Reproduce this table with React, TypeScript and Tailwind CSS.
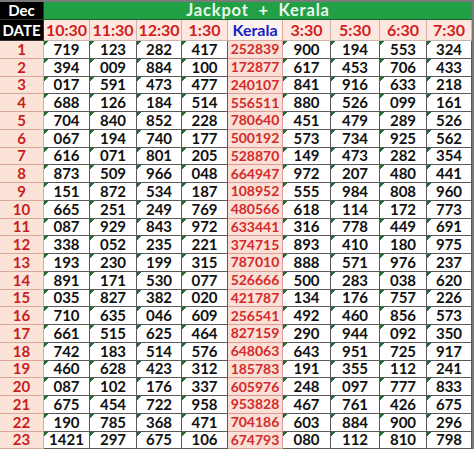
import React from 'react';

const times = ['10:30', '11:30', '12:30', '1:30', 'Kerala', '3:30', '5:30', '6:30', '7:30'];

// 10:30, 11:30, 12:30, 1:30, kerala, 3:30, 5:30, 6:30, 7:30
const rows: string[][] = [
  ['719', '123', '282', '417', '252839', '900', '194', '553', '324'],
  ['394', '009', '884', '100', '172877', '617', '453', '706', '433'],
  ['017', '591', '473', '477', '240107', '841', '916', '633', '218'],
  ['688', '126', '184', '514', '556511', '880', '526', '099', '161'],
  ['704', '840', '852', '228', '780640', '451', '479', '289', '526'],
  ['067', '194', '740', '177', '500192', '573', '734', '925', '562'],
  ['616', '071', '801', '205', '528870', '149', '473', '282', '354'],
  ['873', '509', '966', '048', '664947', '972', '207', '480', '441'],
  ['151', '872', '534', '187', '108952', '555', '984', '808', '960'],
  ['665', '251', '249', '769', '480566', '618', '114', '172', '773'],
  ['087', '929', '843', '972', '633441', '316', '778', '449', '691'],
  ['338', '052', '235', '221', '374715', '893', '410', '180', '975'],
  ['193', '230', '199', '315', '787010', '888', '571', '976', '237'],
  ['891', '171', '530', '077', '526666', '500', '283', '038', '620'],
  ['035', '827', '382', '020', '421787', '134', '176', '757', '226'],
  ['710', '635', '046', '609', '256541', '492', '460', '856', '573'],
  ['661', '515', '625', '464', '827159', '290', '944', '092', '350'],
  ['742', '183', '514', '576', '648063', '643', '951', '725', '917'],
  ['460', '628', '423', '312', '185783', '191', '355', '112', '241'],
  ['087', '102', '176', '337', '605976', '248', '097', '777', '833'],
  ['675', '454', '722', '958', '953828', '467', '761', '426', '675'],
  ['190', '785', '368', '471', '704186', '603', '884', '900', '296'],
  ['1421', '297', '675', '106', '674793', '080', '112', '810', '798'],
];

const cell = 'flex items-center justify-center border-r border-b border-[#5a5a5a] leading-none';

export default function App() {
  return (
    <div className="w-[474px] h-[449px] overflow-hidden bg-white border-t-2 border-r-2 border-[#7a7a7a] font-['Lato','Open_Sans',sans-serif] font-bold text-[15px]">
      <div className="grid grid-cols-[44px_46px_47px_45px_46px_55px_48px_49px_47px_45px] grid-rows-[18px_21px_repeat(23,17.75px)]">
        {/* Title row */}
        <div className={`${cell} bg-black text-white border-[#333]`}>Dec</div>
        <div className="col-span-9 flex items-center justify-center bg-[#21a046] text-[#e9f8ea] text-[16.5px] tracking-[0.05em] whitespace-pre border-b border-[#1a5c2c]">
          Jackpot  +  Kerala
        </div>

        {/* Header row */}
        <div className={`${cell} bg-black text-white border-[#333]`}>DATE</div>
        {times.map((t) =>
          t === 'Kerala' ? (
            <div key={t} className={`${cell} bg-[#fdf4f1] text-[#1622c4] text-[16px] border-[#d9a9a0]`}>{t}</div>
          ) : (
            <div key={t} className={`${cell} bg-[#fde7de] text-[#cf1f1f] text-[16px] border-[#c9b4ae]`}>{t}</div>
          )
        )}

        {/* Data rows */}
        {rows.map((r, i) => (
          <React.Fragment key={i}>
            <div className={`${cell} bg-[#fce3d8] text-[#c81e1e] border-[#d8a89c]`}>{i + 1}</div>
            {r.map((v, j) =>
              j === 4 ? (
                <div key={j} className={`${cell} bg-[#fbe0d8] text-[#d42a2a] text-[14px] border-[#dc9c94]`}>{v}</div>
              ) : (
                <div
                  key={j}
                  className={`${cell} bg-white bg-[linear-gradient(135deg,#1f6e35_3px,transparent_3px)] text-[#111]`}
                >
                  {v}
                </div>
              )
            )}
          </React.Fragment>
        ))}
      </div>
    </div>
  );
}
